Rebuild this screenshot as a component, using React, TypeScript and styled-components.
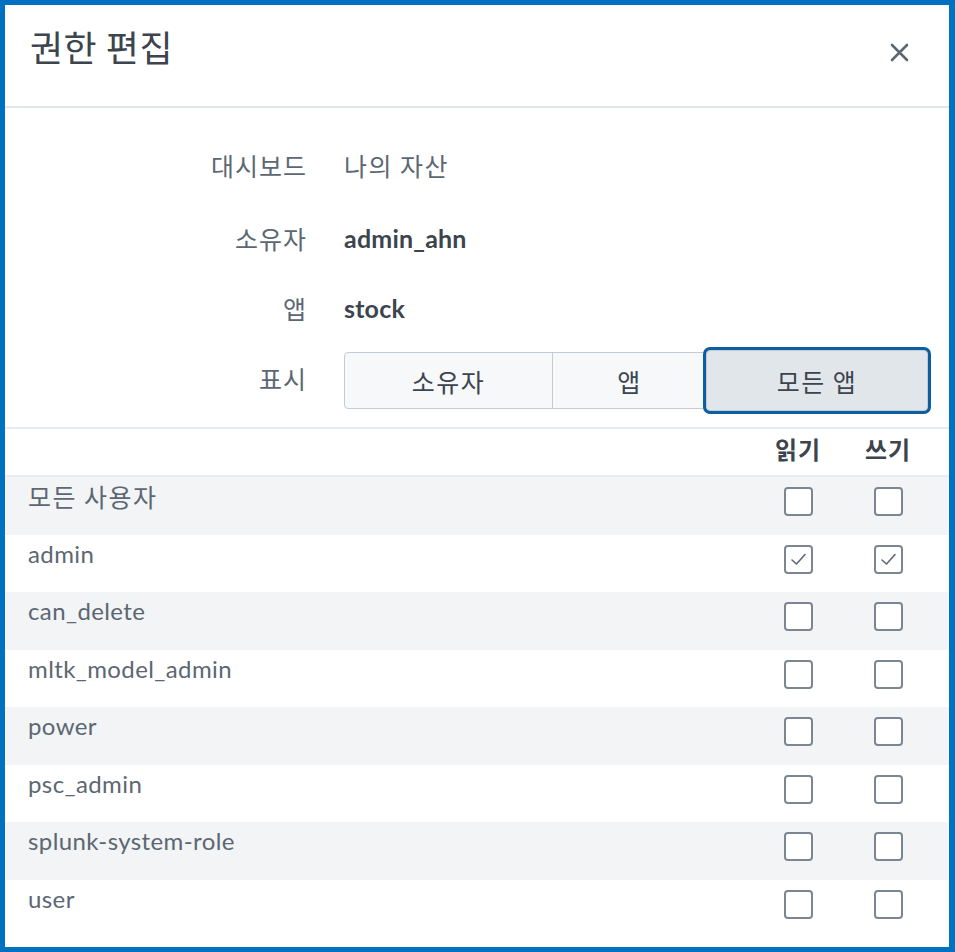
import React from "react";
import styled, { createGlobalStyle } from "styled-components";

const Global = createGlobalStyle`
  html, body { margin: 0; padding: 0; background: #ffffff; }
  body { font-family: "Lato", "Noto Sans CJK KR", sans-serif; }
  * { box-sizing: border-box; }
`;

const ko = '"Noto Sans CJK KR", sans-serif';
const latin = '"Lato", "Noto Sans CJK KR", sans-serif';

const Frame = styled.div`
  width: 955px;
  height: 952px;
  border: 5px solid #0070c0;
  border-right-width: 6px;
  background: #ffffff;
  display: flex;
  flex-direction: column;
  overflow: hidden;
`;

const Header = styled.div`
  height: 103px;
  flex: none;
  display: flex;
  align-items: flex-start;
  justify-content: space-between;
  padding: 18px 40px 0 25px;
  border-bottom: 2px solid #e1e6eb;
`;

const Title = styled.h1`
  margin: 0;
  font-family: ${ko};
  font-weight: 400;
  font-size: 36px;
  letter-spacing: 0.5px;
  line-height: 46px;
  color: #3c444d;
`;

const CloseButton = styled.button`
  border: none;
  background: none;
  padding: 0;
  margin-top: 20px;
  width: 19px;
  height: 19px;
  display: flex;
  cursor: pointer;
`;

const Form = styled.div`
  flex: none;
  padding-top: 20px;
  padding-bottom: 8px;
  border-bottom: 2px solid #e8ecf0;
`;

const FieldRow = styled.div<{ $h: number }>`
  height: ${(p) => p.$h}px;
  display: grid;
  grid-template-columns: 302px 1fr;
  column-gap: 37px;
  align-items: center;
`;

const Label = styled.div<{ $lift?: number }>`
  text-align: right;
  font-family: ${ko};
  font-size: 25px;
  letter-spacing: 1px;
  line-height: 32px;
  color: #5c6773;
  padding-bottom: ${(p) => p.$lift ?? 0}px;
`;

const Value = styled.div<{ $bold?: boolean; $ko?: boolean }>`
  font-family: ${(p) => (p.$ko ? ko : latin)};
  font-size: 25px;
  letter-spacing: ${(p) => (p.$ko ? 1.5 : 0.2)}px;
  line-height: 32px;
  font-weight: ${(p) => (p.$bold ? 700 : 400)};
  color: ${(p) => (p.$bold ? "#3c444d" : "#5c6773")};
`;

const Group = styled.div`
  display: flex;
  width: 582px;
  height: 57px;
  border: 1px solid #c3cbd4;
  border-radius: 4px;
  background: #f7f8fa;
`;

const SegButton = styled.button<{ $w: number; $active?: boolean }>`
  flex: none;
  width: ${(p) => p.$w}px;
  font-family: ${ko};
  font-size: 25px;
  letter-spacing: 1.5px;
  color: #3c444d;
  border: none;
  border-left: 1px solid #c3cbd4;
  background: ${(p) => (p.$active ? "#e1e6eb" : "transparent")};
  padding: 0;
  cursor: pointer;
  &:first-child { border-left: none; border-radius: 4px 0 0 4px; }
  ${(p) =>
    p.$active
      ? `
    position: relative;
    margin: -3px -3px -3px 0;
    border: 1px solid #c3cbd4;
    border-radius: 4px;
    box-shadow: 0 0 0 3px #0b5fa0;
  `
      : ""}
`;

const Table = styled.div`
  flex: 1;
  display: flex;
  flex-direction: column;
`;

const HeadRow = styled.div`
  height: 48px;
  flex: none;
  display: grid;
  grid-template-columns: 1fr 90px 90px;
  padding-right: 16px;
  align-items: center;
  border-bottom: 2px solid #e8ecf0;
`;

const HeadCell = styled.div`
  text-align: center;
  font-family: ${ko};
  font-weight: 700;
  font-size: 24px;
  letter-spacing: 1px;
  color: #3c444d;
  padding-bottom: 7px;
`;

const Row = styled.div<{ $odd: boolean; $last?: boolean }>`
  height: 57.5px;
  flex: ${(p) => (p.$last ? "1" : "none")};
  display: grid;
  grid-template-columns: 1fr 90px 90px;
  padding: 10px 16px 0 23px;
  align-items: start;
  background: ${(p) => (p.$odd ? "#f2f4f5" : "#ffffff")};
`;

const RoleName = styled.div<{ $ko?: boolean }>`
  font-family: ${(p) => (p.$ko ? ko : latin)};
  font-size: ${(p) => (p.$ko ? 25 : 24)}px;
  letter-spacing: ${(p) => (p.$ko ? 1.5 : 0.4)}px;
  line-height: 18px;
  color: #5c6773;
`;

const CheckCell = styled.div`
  display: flex;
  justify-content: center;
`;

const Box = styled.span`
  width: 29px;
  height: 29px;
  border: 2px solid #7b8692;
  border-radius: 4px;
  background: #ffffff;
  display: flex;
  align-items: center;
  justify-content: center;
`;

const Checkbox = ({ checked }: { checked: boolean }) => (
  <Box role="checkbox" aria-checked={checked}>
    {checked && (
      <svg width="19" height="19" viewBox="0 0 19 19">
        <polyline points="3,10 7.5,14 16,4.5" fill="none" stroke="#5c6773" strokeWidth="1.6" strokeLinecap="round" strokeLinejoin="round" />
      </svg>
    )}
  </Box>
);

const roles: { name: string; read: boolean; write: boolean; ko?: boolean }[] = [
  { name: "모든 사용자", read: false, write: false, ko: true },
  { name: "admin", read: true, write: true },
  { name: "can_delete", read: false, write: false },
  { name: "mltk_model_admin", read: false, write: false },
  { name: "power", read: false, write: false },
  { name: "psc_admin", read: false, write: false },
  { name: "splunk-system-role", read: false, write: false },
  { name: "user", read: false, write: false },
];

export default function App() {
  return (
    <>
      <Global />
      <Frame>
        <Header>
          <Title>권한 편집</Title>
          <CloseButton aria-label="닫기">
            <svg width="19" height="19" viewBox="0 0 19 19">
              <path d="M2 2 L17 17 M17 2 L2 17" stroke="#5c6773" strokeWidth="2.6" strokeLinecap="round" />
            </svg>
          </CloseButton>
        </Header>
        <Form>
          <FieldRow $h={73}>
            <Label>대시보드</Label>
            <Value $ko>나의 자산</Value>
          </FieldRow>
          <FieldRow $h={73}>
            <Label>소유자</Label>
            <Value $bold>admin_ahn</Value>
          </FieldRow>
          <FieldRow $h={68}>
            <Label>앱</Label>
            <Value $bold>stock</Value>
          </FieldRow>
          <FieldRow $h={77}>
            <Label $lift={5}>표시</Label>
            <Group>
              <SegButton $w={207}>소유자</SegButton>
              <SegButton $w={154}>앱</SegButton>
              <SegButton $w={222} $active>
                모든 앱
              </SegButton>
            </Group>
          </FieldRow>
        </Form>
        <Table>
          <HeadRow>
            <div />
            <HeadCell>읽기</HeadCell>
            <HeadCell>쓰기</HeadCell>
          </HeadRow>
          {roles.map((r, i) => (
            <Row key={r.name} $odd={i % 2 === 0} $last={i === roles.length - 1}>
              <RoleName $ko={r.ko}>{r.name}</RoleName>
              <CheckCell>
                <Checkbox checked={r.read} />
              </CheckCell>
              <CheckCell>
                <Checkbox checked={r.write} />
              </CheckCell>
            </Row>
          ))}
        </Table>
      </Frame>
    </>
  );
}
